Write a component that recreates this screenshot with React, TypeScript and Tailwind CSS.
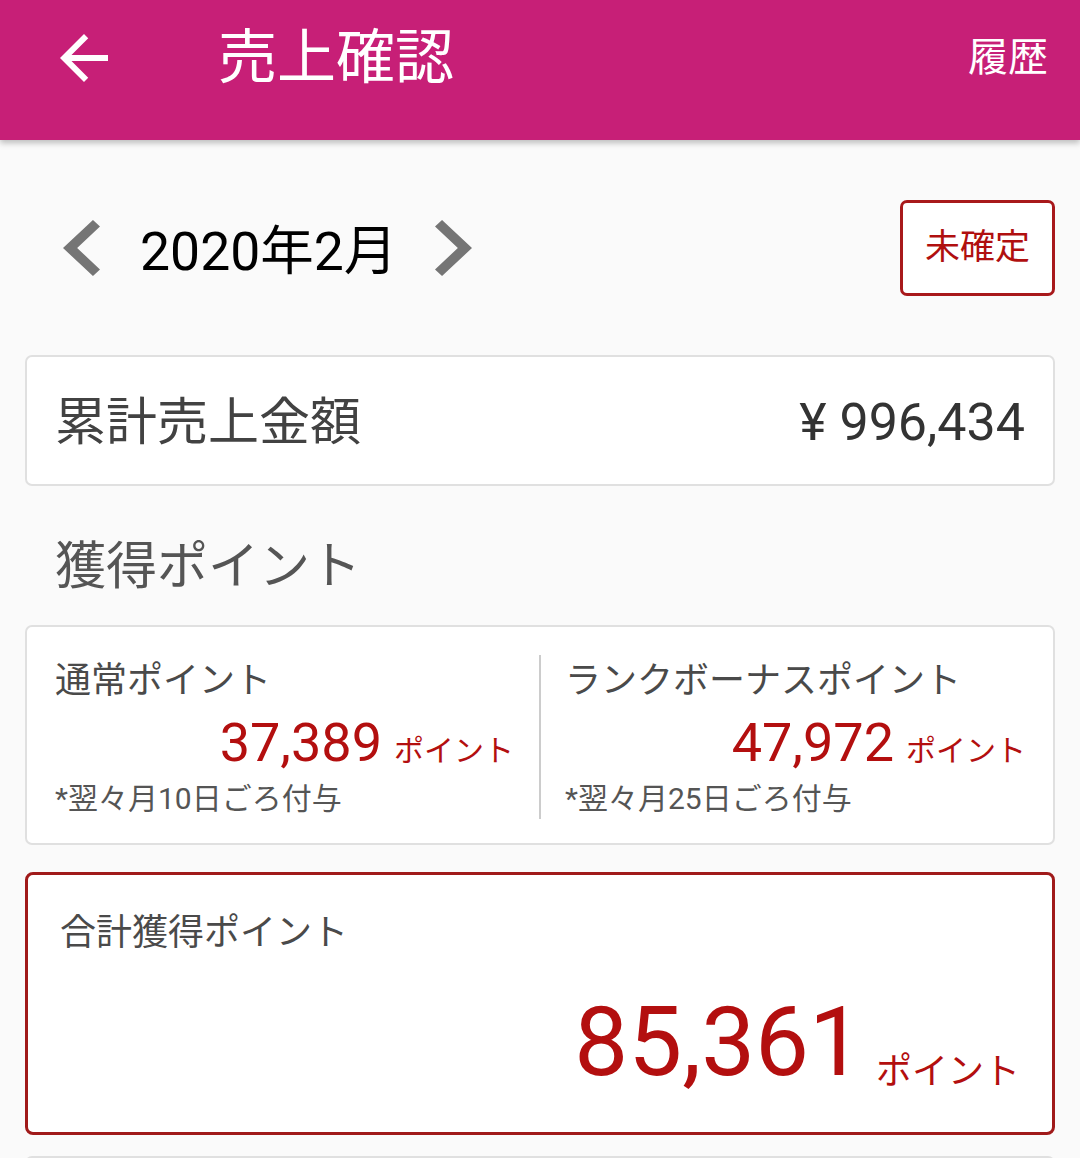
import React from "react";

function BackArrow() {
  return (
    <svg width="72" height="72" viewBox="0 0 24 24" className="shrink-0">
      <path fill="#ffffff" d="M20 11H7.83l5.59-5.59L12 4l-8 8 8 8 1.41-1.41L7.83 13H20v-2z" />
    </svg>
  );
}

function ChevronLeft() {
  return (
    <svg width="37" height="56" viewBox="8 6 7.41 12" preserveAspectRatio="none" className="shrink-0">
      <path fill="#757575" d="M15.41 7.41L14 6l-6 6 6 6 1.41-1.41L10.83 12z" />
    </svg>
  );
}

function ChevronRight() {
  return (
    <svg width="37" height="56" viewBox="8.59 6 7.41 12" preserveAspectRatio="none" className="shrink-0">
      <path fill="#757575" d="M10 6L8.59 7.41 13.17 12l-4.58 4.59L10 18l6-6z" />
    </svg>
  );
}

function PointColumn({ label, value, note, right }: { label: string; value: string; note: string; right: boolean }) {
  return (
    <div className={"flex flex-col " + (right ? "pl-[24px] pr-[27px]" : "pl-[28px] pr-[25px]")}>
      <div className="text-[36px] leading-[40px] text-[#4a4a4a] whitespace-nowrap">{label}</div>
      <div className="mt-[13px] flex items-baseline justify-end gap-[12px] text-[#b30f0f]">
        <span className="text-[54px] leading-[58px]">{value}</span>
        <span className="text-[30px] leading-[58px]">ポイント</span>
      </div>
      <div className="mt-[1px] text-[30px] leading-[36px] text-[#555555] whitespace-nowrap">{note}</div>
    </div>
  );
}

export default function App() {
  return (
    <div className="h-[1158px] w-[1080px] overflow-hidden bg-[#fafafa] font-[Roboto,'Noto_Sans_CJK_JP',sans-serif]">
      <header className="relative z-10 flex h-[140px] items-center bg-[#c71f77] pb-[24px] pl-[48px] pr-[32px] shadow-[0_3px_6px_rgba(0,0,0,0.25)]">
        <BackArrow />
        <div className="ml-[98px] text-[59px] leading-[70px] text-white">売上確認</div>
        <div className="ml-auto text-[40px] leading-[50px] text-white">履歴</div>
      </header>

      <main className="px-[25px]">
        <div className="mt-[60px] flex h-[96px] items-center">
          <div className="ml-[38px]">
            <ChevronLeft />
          </div>
          <div className="ml-[40px] mt-[8px] text-[53.5px] leading-[60px] text-black">2020年2月</div>
          <div className="ml-[38px]">
            <ChevronRight />
          </div>
          <button className="ml-auto flex h-[96px] w-[155px] items-center justify-center rounded-[7px] border-[3px] border-[#a8191b] bg-white text-[35px] leading-[40px] text-[#b00f0f]">
            未確定
          </button>
        </div>

        <div className="mt-[59px] flex h-[131px] items-center justify-between rounded-[7px] border-2 border-[#e0e0e0] bg-white pt-[5px] px-[28px]">
          <div className="text-[51px] leading-[60px] text-[#424242]">累計売上金額</div>
          <div className="text-[52px] leading-[60px] text-[#333333]">¥ 996,434</div>
        </div>

        <div className="mt-[51px] pl-[30px] text-[51px] leading-[60px] text-[#555555]">獲得ポイント</div>

        <div className="mt-[28px] grid h-[220px] grid-cols-[1fr_2px_1fr] rounded-[7px] border-2 border-[#e0e0e0] bg-white pt-[34px]">
          <PointColumn label="通常ポイント" value="37,389" note="*翌々月10日ごろ付与" right={false} />
          <div className="mt-[-6px] h-[164px] bg-[#cccccc]" />
          <PointColumn label="ランクボーナスポイント" value="47,972" note="*翌々月25日ごろ付与" right={true} />
        </div>

        <div className="mt-[27px] flex h-[263px] flex-col rounded-[8px] border-[3px] border-[#a01a1a] bg-white pl-[32px] pr-[32px] pt-[38px]">
          <div className="text-[36px] leading-[40px] text-[#4a4a4a]">合計獲得ポイント</div>
          <div className="mt-auto mb-[42px] flex items-end justify-end gap-[13px] text-[#b30f0f]">
            <span className="text-[96px] leading-[96px]">85,361</span>
            <span className="text-[36px] leading-[36px]">ポイント</span>
          </div>
        </div>

        <div className="mt-[21px] h-[100px] rounded-[7px] border-2 border-[#e0e0e0] bg-white" />
      </main>
    </div>
  );
}
